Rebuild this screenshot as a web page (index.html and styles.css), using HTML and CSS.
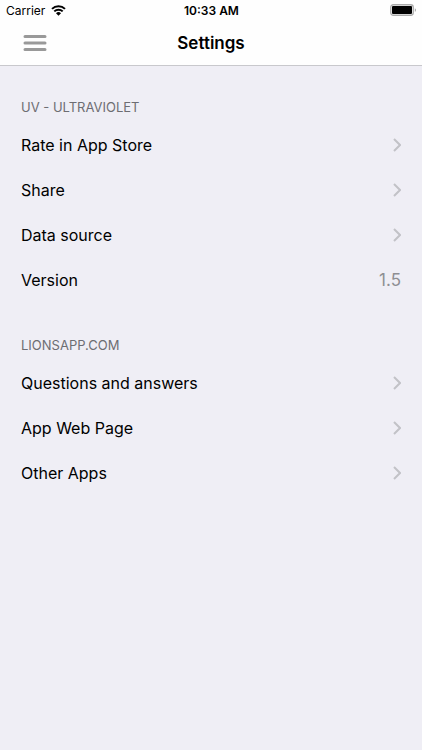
FILE: index.html
```html
<!DOCTYPE html>
<html lang="en">
<head>
<meta charset="utf-8">
<meta name="viewport" content="width=device-width, initial-scale=1">
<title>Settings</title>
<link rel="stylesheet" href="styles.css">
</head>
<body>
<header class="top">
  <div class="status">
    <div class="carrier"><span>Carrier</span>
      <svg class="wifi" viewBox="0 0 15 11" aria-hidden="true"><path d="M1 3.9a9.3 9.3 0 0 1 13 0M3.3 6.4a6 6 0 0 1 8.4 0" fill="none" stroke="#000" stroke-width="2"/><path d="M7.5 10.8 5 8.3a3.6 3.6 0 0 1 5 0z"/></svg>
    </div>
    <time class="clock">10:33 AM</time>
    <svg class="battery" viewBox="0 0 27 12" aria-hidden="true"><rect x=".75" y=".75" width="22.5" height="10.5" rx="2.5" fill="none" stroke="#aaa" stroke-width="1.3"/><rect x="2" y="2" width="20" height="8" rx="1"/><path d="M24.8 4.2a1.9 1.9 0 0 1 0 3.6z" fill="#aaa"/></svg>
  </div>
  <nav class="bar">
    <button class="menu" type="button" aria-label="Menu"><svg viewBox="0 0 24 18" aria-hidden="true"><path d="M2 2.5h20M2 9h20M2 15.5h20" stroke="#999" stroke-width="3" stroke-linecap="round"/></svg></button>
    <h1 class="title">Settings</h1>
  </nav>
</header>
<main class="content">
  <section class="group">
    <h2 class="heading">UV - ULTRAVIOLET</h2>
    <ul class="list">
      <li><a class="row" href="#rate">Rate in App Store<svg class="chevron" viewBox="0 0 8 14" aria-hidden="true"><path d="M1 1l6 6-6 6"/></svg></a></li>
      <li><a class="row" href="#share">Share<svg class="chevron" viewBox="0 0 8 14" aria-hidden="true"><path d="M1 1l6 6-6 6"/></svg></a></li>
      <li><a class="row" href="#source">Data source<svg class="chevron" viewBox="0 0 8 14" aria-hidden="true"><path d="M1 1l6 6-6 6"/></svg></a></li>
      <li class="row">Version<span class="value">1.5</span></li>
    </ul>
  </section>
  <section class="group">
    <h2 class="heading">LIONSAPP.COM</h2>
    <ul class="list">
      <li><a class="row" href="#questions">Questions and answers<svg class="chevron" viewBox="0 0 8 14" aria-hidden="true"><path d="M1 1l6 6-6 6"/></svg></a></li>
      <li><a class="row" href="#web">App Web Page<svg class="chevron" viewBox="0 0 8 14" aria-hidden="true"><path d="M1 1l6 6-6 6"/></svg></a></li>
      <li><a class="row" href="#apps">Other Apps<svg class="chevron" viewBox="0 0 8 14" aria-hidden="true"><path d="M1 1l6 6-6 6"/></svg></a></li>
    </ul>
  </section>
</main>
</body>
</html>
```
FILE: styles.css
```css
* { box-sizing: border-box; }
body { margin: 0; background: #efeef5; color: #000; font-family: Inter, sans-serif; }
.top { background: #fefefe; border-bottom: 1px solid #c8c8cc; }
.status { display: grid; grid-template-columns: 1fr auto 1fr; align-items: center; height: 20px; padding: 0 5px 0 6px; font-size: 12px; }
.carrier { display: flex; align-items: center; gap: 6px; }
.wifi { width: 15px; height: 11px; }
.clock { font-weight: 600; }
.battery { width: 27px; height: 12px; justify-self: end; }
.bar { display: grid; grid-template-columns: 1fr auto 1fr; align-items: center; height: 45px; padding: 0 23px; }
.menu { display: flex; justify-self: start; padding: 0; border: 0; background: none; }
.menu svg { width: 24px; height: 18px; }
.title { margin: 0; font-size: 17px; font-weight: 600; }
.content { padding-top: 30px; }
.group { margin-bottom: 32px; }
.heading { margin: 0; padding: 0 21px; font-size: 13px; line-height: 22px; height: 26px; font-weight: 400; color: #6d6d72; }
.list { margin: 0; padding: 0; list-style: none; }
.row { display: flex; justify-content: space-between; align-items: center; height: 45px; padding: 0 21px; font-size: 16px; color: inherit; text-decoration: none; }
.value { font-size: 17px; color: #8e8e93; }
.chevron { width: 8px; height: 14px; fill: none; stroke: #c2c2c7; stroke-width: 2; }
```
